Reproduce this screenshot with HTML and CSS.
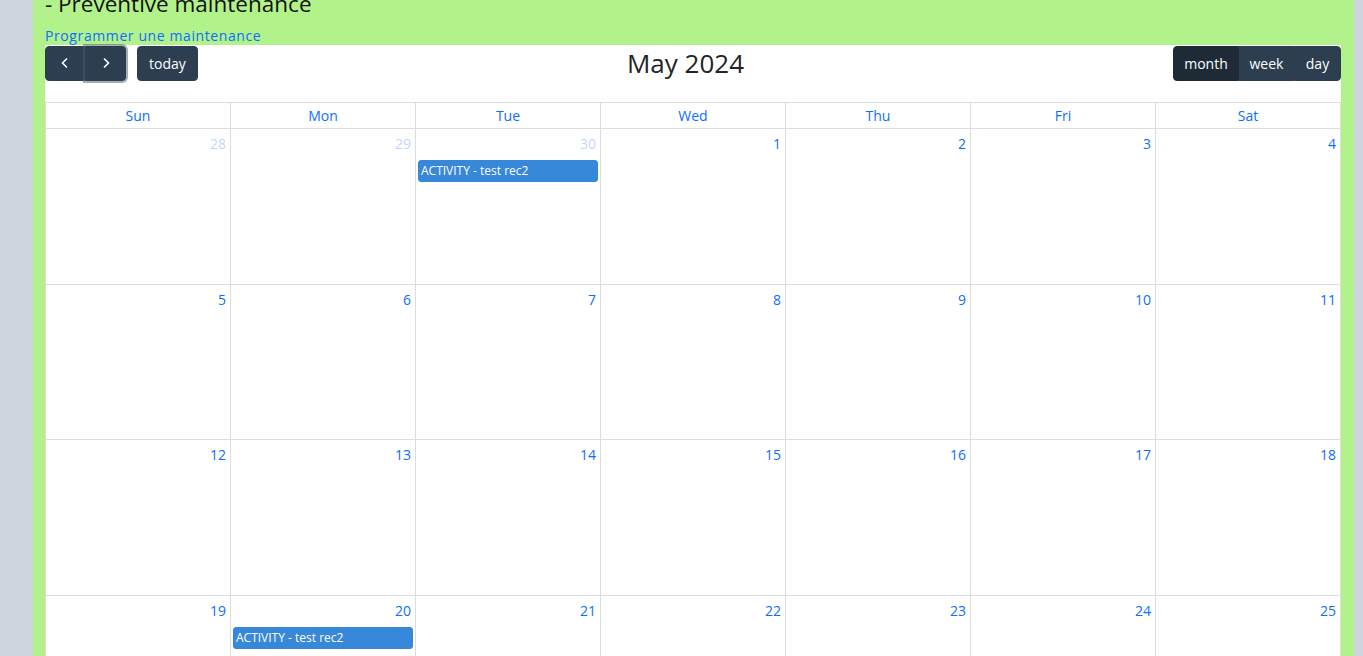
FILE: index.html
```html
<!DOCTYPE html>
<html lang="fr">
<head>
  <meta charset="UTF-8" />
  <title>Preventive maintenance</title>
  <link rel="stylesheet" href="styles.css">
</head>
<body>
  <div class="panel">
    <h5 class="panel-title">- Preventive maintenance</h5>
    <a class="panel-link" href="#">Programmer une maintenance</a>

    <div class="calendar">
      <div class="toolbar">
        <div class="chunk">
          <div class="btn-group">
            <button class="btn btn-prev" aria-label="prev">
              <svg width="14" height="14" viewBox="0 0 14 14"><path d="M9 2.5 4.5 7 9 11.5" fill="none" stroke="#fff" stroke-width="1.6"/></svg>
            </button>
            <button class="btn btn-next focus" aria-label="next">
              <svg width="14" height="14" viewBox="0 0 14 14"><path d="M5 2.5 9.5 7 5 11.5" fill="none" stroke="#fff" stroke-width="1.6"/></svg>
            </button>
          </div>
          <button class="btn btn-today">today</button>
        </div>
        <h2 class="cal-title">May 2024</h2>
        <div class="chunk">
          <div class="btn-group">
            <button class="btn btn-month active">month</button>
            <button class="btn btn-week">week</button>
            <button class="btn btn-day">day</button>
          </div>
        </div>
      </div>

      <div class="grid">
        <div class="head">Sun</div>
        <div class="head">Mon</div>
        <div class="head">Tue</div>
        <div class="head">Wed</div>
        <div class="head">Thu</div>
        <div class="head">Fri</div>
        <div class="head">Sat</div>

        <div class="day other"><span class="num">28</span></div>
        <div class="day other"><span class="num">29</span></div>
        <div class="day other"><span class="num">30</span><div class="event">ACTIVITY - test rec2</div></div>
        <div class="day"><span class="num">1</span></div>
        <div class="day"><span class="num">2</span></div>
        <div class="day"><span class="num">3</span></div>
        <div class="day"><span class="num">4</span></div>

        <div class="day"><span class="num">5</span></div>
        <div class="day"><span class="num">6</span></div>
        <div class="day"><span class="num">7</span></div>
        <div class="day"><span class="num">8</span></div>
        <div class="day"><span class="num">9</span></div>
        <div class="day"><span class="num">10</span></div>
        <div class="day"><span class="num">11</span></div>

        <div class="day"><span class="num">12</span></div>
        <div class="day"><span class="num">13</span></div>
        <div class="day"><span class="num">14</span></div>
        <div class="day"><span class="num">15</span></div>
        <div class="day"><span class="num">16</span></div>
        <div class="day"><span class="num">17</span></div>
        <div class="day"><span class="num">18</span></div>

        <div class="day"><span class="num">19</span></div>
        <div class="day"><span class="num">20</span><div class="event">ACTIVITY - test rec2</div></div>
        <div class="day"><span class="num">21</span></div>
        <div class="day"><span class="num">22</span></div>
        <div class="day"><span class="num">23</span></div>
        <div class="day"><span class="num">24</span></div>
        <div class="day"><span class="num">25</span></div>
      </div>
    </div>
  </div>
</body>
</html>
```

FILE: styles.css
```css
body {
  margin: 0;
  background: #cfd5dc;
  font-family: 'Open Sans', sans-serif;
  overflow: hidden;
}
.panel {
  margin: 0 9px 0 33px;
  background: #b1f28b;
  padding: 0 13px 0 12px;
  height: 700px;
}
.panel-title {
  margin: -10px 0 0 0;
  height: 28px;
  line-height: 28px;
  font-size: 22.5px;
  font-weight: 400;
  color: #111;
}
.panel-link {
  display: block;
  margin-top: 10px;
  height: 17px;
  line-height: 16px;
  font-size: 14px;
  letter-spacing: 0.6px;
  color: #0d6efd;
  text-decoration: none;
}
.calendar {
  background: #fff;
  font-size: 14px;
}
.toolbar {
  display: flex;
  justify-content: space-between;
  align-items: center;
  margin-bottom: 21px;
}
.chunk {
  display: flex;
  align-items: center;
}
.cal-title {
  margin: 0;
  font-size: 26px;
  font-weight: 400;
  color: #212529;
}
.btn-group {
  display: flex;
}
.btn {
  height: 35px;
  border: 1px solid #2c3e50;
  background: #2c3e50;
  color: #fff;
  font-family: inherit;
  font-size: 14px;
  padding: 0;
  border-radius: 4px;
  display: flex;
  align-items: center;
  justify-content: center;
  cursor: pointer;
}
.btn-group .btn {
  border-radius: 0;
}
.btn-group .btn:first-child {
  border-radius: 4px 0 0 4px;
}
.btn-group .btn:last-child {
  border-radius: 0 4px 4px 0;
}
.btn.active {
  background: #1e2b37;
  border-color: #1e2b37;
}
.btn.focus {
  box-shadow: 0 0 0 2px rgba(76, 91, 106, 0.5);
  position: relative;
}
.btn-prev { width: 40px; }
.btn-next { width: 41px; }
.btn-today { width: 61px; margin-left: 11px; }
.btn-month { width: 66px; }
.btn-week { width: 55px; }
.btn-day { width: 47px; }

.grid {
  display: grid;
  grid-template-columns: repeat(7, 1fr);
  border-left: 1px solid #ddd;
  border-top: 1px solid #ddd;
}
.head {
  height: 25px;
  line-height: 25px;
  text-align: center;
  color: #0d6efd;
  border-right: 1px solid #ddd;
  border-bottom: 1px solid #ddd;
}
.day {
  height: 154.67px;
  border-right: 1px solid #ddd;
  border-bottom: 1px solid #ddd;
  display: flex;
  flex-direction: column;
}
.num {
  align-self: flex-end;
  padding: 4px 4px 0 4px;
  line-height: 21px;
  color: #0d6efd;
}
.day.other .num {
  color: rgba(13, 110, 253, 0.3);
}
.event {
  margin: 6px 2px 0 2px;
  height: 22px;
  line-height: 20px;
  padding: 0 2px;
  background: #3788d8;
  border: 1px solid #3788d8;
  border-radius: 3px;
  color: #fff;
  font-size: 12px;
  box-sizing: border-box;
}
```
